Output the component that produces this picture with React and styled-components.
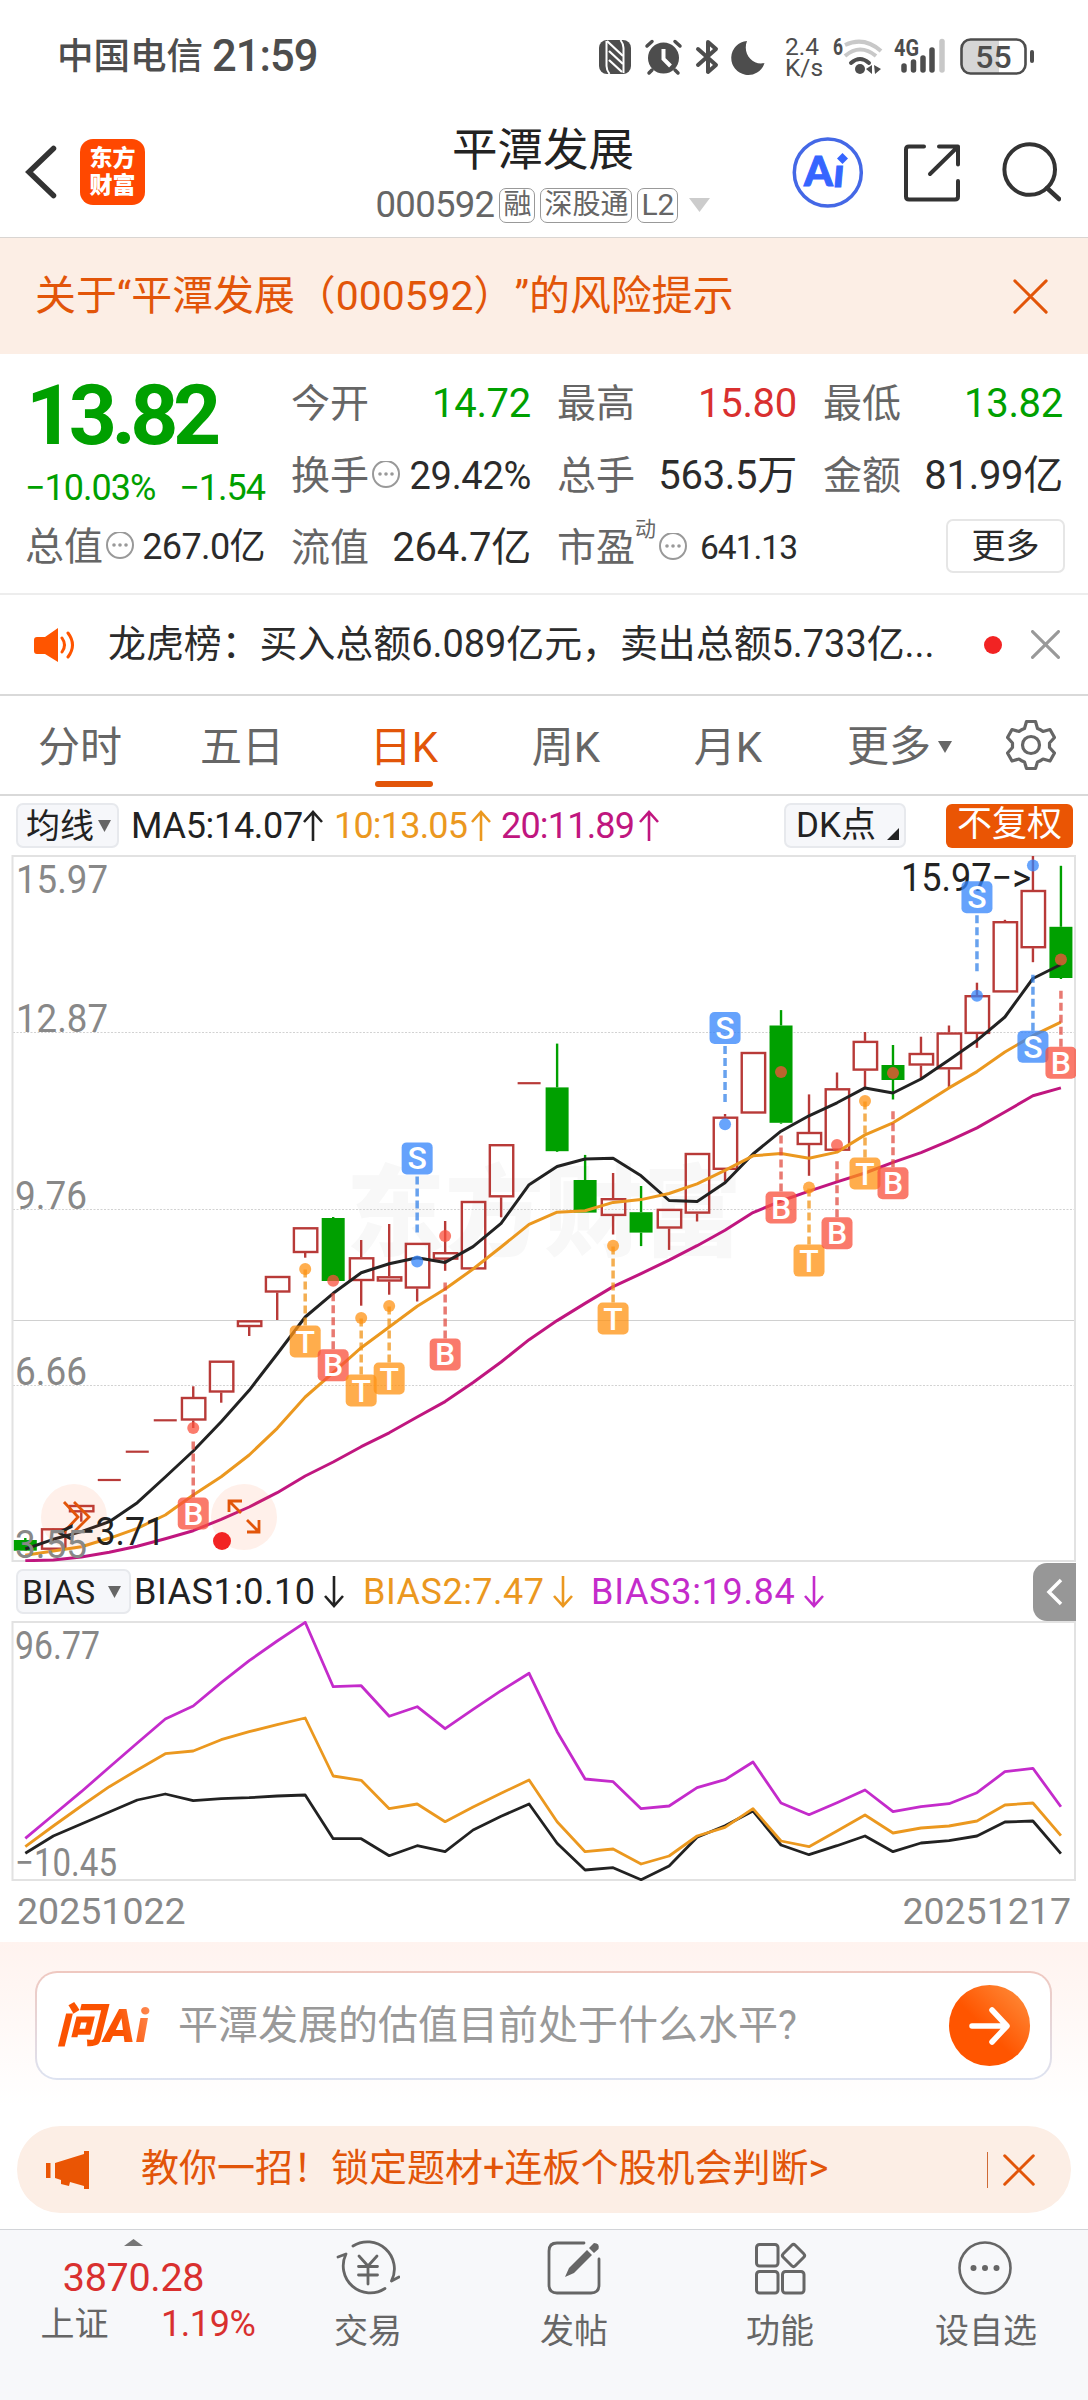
import React from "react";
import styled, { createGlobalStyle } from "styled-components";

const GlobalStyle = createGlobalStyle`
  * {
    box-sizing: border-box;
  }

  body {
    margin: 0;
    background: #fff;
    color: #2b2b2b;
    font-family: Roboto, "Noto Sans CJK SC", sans-serif;
  }

  svg {
    display: block;
    flex: none;
  }
`;

const GREEN = "#00a000";
const RED = "#d9302f";
const ORANGE = "#e25509";
const MA_YELLOW = "#eb981f";
const MA_PINK = "#c0167f";
const BIAS_PURPLE = "#c42bcb";

const Page = styled.main`
  width: 1088px;
  height: 2400px;
  display: flex;
  flex-direction: column;
  overflow: hidden;
  line-height: 1;
  white-space: nowrap;
`;

const Text = styled.span`
  font-size: ${(props) => props.$size}px;
  font-weight: ${(props) => props.$weight || 400};
  color: ${(props) => props.$color || "inherit"};
  letter-spacing: ${(props) => props.$track || 0}px;
  text-spacing-trim: space-all;
`;

/* status bar */

const StatusBar = styled.div`
  height: 114px;
  padding: 0 53px 0 57px;
  display: flex;
  align-items: center;
  color: #4d4d4d;
`;

const Clock = styled.span`
  margin-left: 9px;
  font-size: 43.5px;
  font-weight: 500;
  letter-spacing: -1px;
`;

const StatusIcons = styled.div`
  margin-left: auto;
  display: flex;
  align-items: center;
`;

const NetSpeed = styled.div`
  width: 33px;
  margin: 0 15px 0 18px;
  font-size: 24.5px;
  line-height: 21px;
`;

/* header */

const Header = styled.header`
  height: 124px;
  padding: 0 27px 0 25px;
  display: grid;
  grid-template-columns: 1fr auto 1fr;
  align-items: start;
  border-bottom: 1px solid #d9d5d2;
`;

const HeaderLeft = styled.div`
  display: flex;
  align-items: center;
  gap: 22px;
  padding-top: 25px;
`;

const Logo = styled.div`
  width: 65px;
  height: 66px;
  padding-top: 6px;
  border-radius: 13px;
  background: #ff4800;
  color: #fff;
  text-align: center;
  font-size: 23px;
  font-weight: 900;
  line-height: 27px;
`;

const HeaderCenter = styled.div`
  display: flex;
  flex-direction: column;
  align-items: center;
  padding-top: 14px;
`;

const StockName = styled.h1`
  margin: 0;
  font-size: 45.5px;
  font-weight: 400;
  line-height: 46px;
  color: #222;
`;

const CodeRow = styled.div`
  display: flex;
  align-items: center;
  height: 36px;
  margin-top: 13px;
  color: #666;
  gap: 5px;
`;

const Tag = styled.span`
  height: 35px;
  padding: 0 3px;
  border: 1.5px solid #999;
  border-radius: 7px;
  font-size: ${(props) => props.$size || 28}px;
  line-height: 32px;
`;

const HeaderRight = styled.div`
  display: flex;
  justify-content: flex-end;
  padding-top: 22px;
`;

/* risk banner */

const Banner = styled.div`
  height: 116px;
  padding: 0 40px 0 35px;
  display: flex;
  align-items: center;
  justify-content: space-between;
  background: #fceee5;
  color: ${ORANGE};
`;

/* quote */

const Quote = styled.section`
  height: 241px;
  padding: 0 25px;
  display: grid;
  grid-template-columns: 240px 240px 240px 240px;
  column-gap: 26px;
  border-bottom: 2px solid #ededed;
`;

const QuoteColumn = styled.div`
  padding-top: ${(props) => props.$top || 14}px;
  display: flex;
  flex-direction: column;
`;

const Price = styled.div`
  height: 88px;
  padding-left: 1px;
  font-size: 84px;
  font-weight: 700;
  line-height: 88px;
  letter-spacing: -5.5px;
  color: ${GREEN};
`;

const Change = styled.div`
  height: 56px;
  margin-bottom: -5px;
  display: flex;
  align-items: center;
  justify-content: space-between;
  font-size: 36px;
  letter-spacing: -1px;
  color: ${GREEN};
`;

const Cell = styled.div`
  height: 72px;
  display: flex;
  align-items: center;
`;

const Label = styled.span`
  font-size: 39px;
  color: #666;
`;

const Value = styled.span`
  margin-left: auto;
  font-size: ${(props) => props.$size || 40}px;
  letter-spacing: ${(props) => props.$track ?? -0.3}px;
  color: ${(props) => props.$color || "#2b2b2b"};
`;

const Sup = styled.span`
  align-self: flex-start;
  margin-top: 7px;
  font-size: 21px;
  color: #666;
`;

const MoreButton = styled.button`
  align-self: flex-end;
  width: 119px;
  height: 54px;
  margin: 7px -2px 0 0;
  border: 2px solid #e6e6e6;
  border-radius: 7px;
  background: #fff;
  color: #2b2b2b;
  font: inherit;
  font-size: 34px;
  line-height: 44px;
`;

/* news strip */

const News = styled.div`
  height: 101px;
  padding: 0 28px 0 34px;
  display: flex;
  align-items: center;
  border-bottom: 2px solid #d9d9d9;
`;

const NewsText = styled.p`
  margin: 0 auto 0 32px;
  font-size: 37.9px;
`;

const RedDot = styled.i`
  width: 18px;
  height: 18px;
  margin-right: 29px;
  border-radius: 50%;
  background: #f22323;
`;

/* tabs */

const Tabs = styled.nav`
  height: 100px;
  padding-right: 32px;
  display: flex;
  align-items: center;
  border-bottom: 2px solid #d9d9d9;
  color: #666;
  font-size: 42px;
`;

const Tab = styled.div`
  width: 162px;
  height: 98px;
  display: flex;
  flex-direction: column;
  align-items: center;
  padding: 31px 2px 0 0;
  color: ${(props) => (props.$active ? ORANGE : "#666")};

  &::after {
    content: "";
    width: 58px;
    height: 6px;
    margin-top: 12px;
    border-radius: 3px;
    background: ${(props) => (props.$active ? ORANGE : "transparent")};
  }
`;

const MoreTab = styled.div`
  display: flex;
  align-items: center;
  gap: 7px;
  margin: 0 auto 0 37px;
  padding-top: 4px;
`;

/* indicator bars */

const IndicatorBar = styled.div`
  height: 59px;
  padding-left: 16px;
  display: flex;
  align-items: center;
  color: #222;
`;

const Picker = styled.div`
  width: ${(props) => props.$width}px;
  height: 45px;
  padding: 0 ${(props) => props.$right || 8}px 0 ${(props) => props.$left || 8}px;
  display: flex;
  align-items: center;
  justify-content: space-between;
  border: 2px solid #e7e9ed;
  border-radius: 7px;
  background: #f6f7fa;
  font-size: ${(props) => props.$size || 34}px;
`;

const Indicator = styled.span`
  width: ${(props) => props.$width}px;
  margin-left: ${(props) => props.$gap}px;
  display: flex;
  align-items: center;
  justify-content: space-between;
  color: ${(props) => props.$color};
  font-size: 36px;
  letter-spacing: ${(props) => props.$track || 0}px;
`;

const AdjustButton = styled.div`
  width: 127px;
  height: 44px;
  margin-left: 40px;
  border-radius: 6px;
  background: #ea5504;
  color: #fff;
  text-align: center;
  font-size: 35px;
  line-height: 42px;
`;

const Collapse = styled.div`
  width: 43px;
  height: 58px;
  margin: 0 12px 0 auto;
  padding-left: 12px;
  display: flex;
  align-items: center;
  border-radius: 14px 0 0 14px;
  background: #979797;
`;

const Dates = styled.div`
  height: 61px;
  padding: 0 17px;
  display: flex;
  align-items: center;
  justify-content: space-between;
  font-size: 37.5px;
  color: #888;
`;

/* ask box */

const Ask = styled.section`
  height: 184px;
  padding: 29px 36px 0 35px;
  background: linear-gradient(#fff3ef, #fff 165px);
`;

const AskBox = styled.div`
  height: 109px;
  padding: 0 20px 0 19px;
  display: flex;
  align-items: center;
  border: 2px solid transparent;
  border-radius: 22px;
  background: linear-gradient(#fff, #fff) padding-box,
    linear-gradient(#efc8c0, #dde3f1) border-box;
`;

const AskLogo = styled.span`
  width: 101px;
  font-size: 47px;
  font-weight: 900;
  font-style: italic;
  letter-spacing: 1px;
  line-height: 54px;
  color: transparent;
  background: linear-gradient(70deg, #fb5200 60%, #ff9868);
  background-clip: text;
`;

const AskText = styled.span`
  margin: 0 auto 0 21px;
  font-size: 40px;
  color: #999;
`;

const AskButton = styled.div`
  width: 81px;
  height: 81px;
  display: grid;
  place-items: center;
  border-radius: 50%;
  background: linear-gradient(45deg, #ff5500 45%, #ff9240);
`;

/* promo pill */

const Promo = styled.div`
  height: 87px;
  margin: 0 17px 16px;
  padding: 0 36px 0 28px;
  flex: none;
  display: flex;
  align-items: center;
  border-radius: 44px;
  background: #fceee5;
  color: ${ORANGE};
`;

const PromoText = styled.span`
  margin: 0 auto 4px 51px;
  font-size: 38px;
`;

const Divider = styled.i`
  width: 1px;
  height: 36px;
  margin-right: 15px;
  background: #cf6a35;
`;

/* bottom nav */

const BottomNav = styled.footer`
  flex: 1;
  display: grid;
  grid-template-columns: 265px repeat(4, 206px);
  border-top: 1px solid #d2d4d8;
  background: #f7f8fa;
`;

const IndexBox = styled.div`
  display: flex;
  flex-direction: column;
  align-items: center;
  padding: 9px 0 0 2px;
`;

const IndexRow = styled.div`
  width: 215px;
  margin: 8px 0 0 29px;
  display: flex;
  align-items: center;
  justify-content: space-between;
`;

const NavItem = styled.div`
  display: flex;
  flex-direction: column;
  align-items: center;
  padding-top: 8px;
  gap: 16px;
  font-size: 34px;
  color: #666;
`;

/* K-line data: [high, bodyTop, bodyBottom, low, falling] in chart pixels */

const candles = [
  [683, 685, 695.7, 696, 1],
  [673, 673.3, 694.7, 694],
  [650, 650, 657.3, 666.7],
  [625, 625, 625, 625],
  [596.7, 596.7, 596.7, 596.7],
  [565.3, 565.3, 565.3, 565.3],
  [531.3, 542, 565.5, 573],
  [506, 505.7, 537.5, 547.7],
  [466, 465.3, 472, 481],
  [422, 421, 437.5, 465],
  [373, 372.3, 398, 402.7],
  [362, 363, 426, 426, 1],
  [385, 402.3, 426, 450.7],
  [369, 421.3, 426.5, 439.7],
  [388, 387.9, 433.5, 446.5],
  [366, 397.2, 404.6, 415.8],
  [347, 346, 414.4, 414],
  [290, 289.2, 342.3, 362.3],
  [228.2, 228.2, 228.2, 228.2],
  [188.6, 232.4, 296.2, 297, 1],
  [299.9, 325, 357.6, 357.6, 1],
  [318, 343.2, 360.9, 379.5],
  [331, 357.2, 377.6, 391.1, 1],
  [354, 353.9, 373.5, 394.9],
  [299, 298, 358.6, 366.5],
  [259, 261.7, 314.8, 326.4],
  [198, 197, 258.5, 258],
  [155.1, 170.5, 267.8, 268.7, 1],
  [239.4, 277, 290, 320.8],
  [217.5, 233.3, 295.7, 295],
  [177, 185.9, 215.6, 232.9],
  [190, 210, 225, 244.5, 1],
  [181.7, 198, 210.5, 223],
  [170.5, 177.5, 214.3, 232.9],
  [127.7, 140.2, 178.9, 192.8],
  [64.8, 66.2, 137.4, 137],
  [1, 35, 93.2, 107.2],
  [10.8, 71.8, 123, 124, 1],
];

const ma5 = [
  694, 684.3, 676.6, 666.7, 647.7, 622, 596, 566.7, 535.3, 499, 462, 438.3,
  417.7, 408.8, 402.8, 407.4, 391.6, 368.3, 329.7, 311.5, 304, 303.2, 320.8,
  345.5, 346.5, 327.8, 299, 276.2, 260.8, 247.8, 232.9, 238, 224, 205, 185.4,
  162, 123.5, 109.5,
];

const ma10 = [
  700.3, 696, 691.7, 683.3, 673.3, 660, 640, 621.7, 600, 573.3, 542, 517.7,
  492.7, 472, 451.2, 434, 414, 392, 369.3, 357.2, 355.8, 347.4, 344.6, 338.5,
  328.8, 315.3, 300.8, 298.5, 303.2, 297.1, 279.9, 267.8, 250.6, 232.9, 216.6,
  197, 180.7, 167.2,
];

const ma20 = [
  705.7, 705, 702, 697.3, 691.3, 683.7, 675.7, 664.3, 652, 637.7, 621, 607,
  591.7, 577.8, 562, 546.6, 527.5, 507, 484.7, 465.6, 448.4, 431.6, 418.6,
  405.1, 390.7, 375.3, 357.6, 346, 336.2, 326.9, 318, 307.4, 297.6, 285.9,
  272.9, 257, 240.8, 232.9,
];

/* [index, letter, dot y, badge center y] */
const markers = [
  [6, "B", 573, 658.5],
  [10, "T", 414, 486.5],
  [11, "B", 425.7, 510.3],
  [12, "T", 463, 535.5],
  [13, "T", 451, 523.5],
  [14, "S", 406.5, 303.4],
  [15, "B", 381, 499.4],
  [21, "T", 390.7, 463.5],
  [25, "S", 269.2, 173],
  [27, "B", 217, 352.5],
  [28, "T", 332.5, 405.6],
  [29, "B", 290, 378.3],
  [30, "T", 246, 318.5],
  [31, "B", 218, 328.3],
  [34, "S", 140.7, 42.2],
  [36, "S", 10.4, 191.7],
  [37, "B", 104.4, 207.7],
];

const markerColors = {
  B: ["#f9503c", "#e0483c"],
  T: ["#ff9314", "#f0900f"],
  S: ["#3485fb", "#2f7fe8"],
};

const bias1 = [
  880, 828, 792, 756, 720, 702, 722, 716, 713, 708, 705, 836, 836, 887, 857,
  875, 810, 769, 732, 850, 930, 923, 959, 918, 832, 797, 753, 855, 884, 857,
  828, 875, 849, 842, 828, 786, 783, 881,
];

const bias2 = [
  860, 798, 738, 680, 630, 581, 573, 539, 515, 494, 474, 648, 661, 746, 732,
  785, 741, 700, 660, 785, 875, 867, 912, 888, 828, 802, 746, 843, 860, 813,
  765, 819, 804, 798, 783, 735, 729, 827,
];

const bias3 = [
  835, 765, 695, 622, 549, 477, 438, 368, 302, 243, 187, 380, 377, 469, 440,
  506, 448, 392, 340, 515, 657, 665, 746, 738, 683, 659, 606, 729, 764, 728,
  690, 755, 740, 731, 698, 635, 625, 740,
];

const xAt = (i) => 25.3 + i * 27.99;
const toPoints = (list, y = (v) => v) =>
  list.map((v, i) => `${xAt(i).toFixed(1)},${y(v).toFixed(1)}`).join(" ");
const biasY = (v) => v / 3 - 61;

const AxisText = ({ x = 17, y, width, children, fill = "#888" }) => (
  <text
    x={x}
    y={y}
    fontSize="39"
    fill={fill}
    textLength={width}
    lengthAdjust="spacingAndGlyphs">
    {children}
  </text>
);

const Candle = ({ i, data }) => {
  const [high, top, bottom, low, falling] = data;
  const x = xAt(i);
  const color = falling ? GREEN : "#b83a38";
  if (top === bottom) {
    return <path d={`M${x - 11.5} ${top}h23`} stroke={color} strokeWidth="2.2" />;
  }
  return (
    <g stroke={color} strokeWidth="2.4" fill="none">
      {high < top && <path d={`M${x} ${high}V${top}`} />}
      {low > bottom && <path d={`M${x} ${bottom}V${low}`} />}
      {falling ? (
        <rect
          x={x - 11.5}
          y={top}
          width="23"
          height={bottom - top}
          fill={color}
          stroke="none"
        />
      ) : (
        <rect x={x - 11.3} y={top + 1} width="23.4" height={bottom - top - 2} />
      )}
    </g>
  );
};

const Marker = ({ i, letter, dot, badge }) => {
  const x = xAt(i);
  const [fill, line] = markerColors[letter];
  const above = badge < dot;
  const from = above ? badge + 18 : badge - 72;
  return (
    <g>
      <path
        d={`M${x} ${from}v56`}
        stroke={line}
        strokeWidth="3.5"
        strokeDasharray="8 4"
        opacity="0.72"
      />
      <circle cx={x} cy={dot} r="6" fill={fill} opacity="0.75" />
      <rect
        x={x - 15.5}
        y={badge - 16}
        width="31"
        height="32"
        rx="5"
        fill={fill}
        opacity="0.76"
      />
      <text
        x={x}
        y={badge + 11}
        textAnchor="middle"
        fontSize="32"
        fontWeight="500"
        fill="#fff">
        {letter}
      </text>
    </g>
  );
};

const KLineChart = () => (
  <svg width="1088" height="707" viewBox="0 0 1088 707">
    <defs>
      <clipPath id="plot">
        <rect x="12" y="0" width="1064" height="707" />
      </clipPath>
    </defs>
    <text
      x="346"
      y="393"
      fontSize="99"
      fontWeight="900"
      fill="#f8f8f8"
      fontFamily="Noto Sans CJK SC">
      东方财富
    </text>
    {[177.5, 354.5, 530.5].map((y) => (
      <path
        key={y}
        d={`M13 ${y}H1075`}
        stroke="#d2d2d2"
        strokeDasharray="2 1.5"
      />
    ))}
    <path d="M13 465.5H1075" stroke="#d0d0d0" />
    <rect
      x="12.5"
      y="1"
      width="1062.5"
      height="705"
      fill="none"
      stroke="#e2e2e2"
      strokeWidth="2"
    />
    <g clipPath="url(#plot)">
      {candles.map((data, i) => (
        <Candle key={i} i={i} data={data} />
      ))}
      <g fill="none" strokeWidth="3" strokeLinejoin="round">
        <polyline points={toPoints(ma5)} stroke="#222" />
        <polyline points={toPoints(ma10)} stroke={MA_YELLOW} />
        <polyline points={toPoints(ma20)} stroke={MA_PINK} />
      </g>
      <circle cx="74" cy="662" r="33" fill="#ff5a14" opacity="0.09" />
      <circle cx="244" cy="662" r="33" fill="#ff5a14" opacity="0.09" />
      <g fill="none" stroke={ORANGE} strokeWidth="2.8">
        <path d="M64 647l14 15l-14 15M74 647l15 15l-15 15" />
        <path d="M229 657v-11h13M230 647l11 11M247 677h12v-12M258 676l-11-11" />
      </g>
      <AxisText x="57" y="690" width="108" fill="#222">
        &lt;−3.71
      </AxisText>
      <AxisText x="901" y="36" width="130" fill="#222">
        15.97−&gt;
      </AxisText>
      <circle cx="222" cy="686" r="9" fill="#f22323" />
      {markers.map(([i, letter, dot, badge]) => (
        <Marker key={i} i={i} letter={letter} dot={dot} badge={badge} />
      ))}
    </g>
    <AxisText x="16" y="38" width="92">
      15.97
    </AxisText>
    <AxisText x="16" y="177" width="92">
      12.87
    </AxisText>
    <AxisText x="15" y="354" width="72">
      9.76
    </AxisText>
    <AxisText x="15" y="530" width="72">
      6.66
    </AxisText>
    <AxisText x="15" y="703" width="72">
      3.55
    </AxisText>
  </svg>
);

const BiasChart = () => (
  <svg width="1088" height="260" viewBox="0 0 1088 260">
    <rect
      x="12.5"
      y="1"
      width="1062.5"
      height="258"
      fill="none"
      stroke="#e2e2e2"
      strokeWidth="2"
    />
    <g fill="none" strokeWidth="2.8" strokeLinejoin="round">
      <polyline points={toPoints(bias1, biasY)} stroke="#222" />
      <polyline points={toPoints(bias2, biasY)} stroke={MA_YELLOW} />
      <polyline points={toPoints(bias3, biasY)} stroke={BIAS_PURPLE} />
    </g>
    <AxisText x="15" y="38" width="85">
      96.77
    </AxisText>
    <AxisText x="15" y="255" width="102">
      −10.45
    </AxisText>
  </svg>
);

/* small drawings */

const Caret = ({ width = 13, height = 12, color = "#666" }) => (
  <svg width={width} height={height} viewBox="0 0 10 10" preserveAspectRatio="none">
    <path d="M0 0h10L5 10z" fill={color} />
  </svg>
);

const Cross = ({ size = 28, color = "currentColor", width = 3 }) => (
  <svg width={size} height={size} viewBox="0 0 28 28">
    <path
      d="M1.5 1.5l25 25M26.5 1.5l-25 25"
      stroke={color}
      strokeWidth={width}
      strokeLinecap="round"
    />
  </svg>
);

const Arrow = ({ up }) => (
  <svg width="20" height="34" viewBox="0 0 20 34">
    <path
      d={up ? "M10 32V3M1 13l9-10 9 10" : "M10 1v30M1 21l9 10 9-10"}
      fill="none"
      stroke="currentColor"
      strokeWidth="2.6"
    />
  </svg>
);

const InfoDots = () => (
  <svg width="32" height="30" viewBox="0 0 32 30">
    <circle cx="17" cy="13" r="13" fill="none" stroke="#999" strokeWidth="2" />
    <g fill="#999">
      <circle cx="11" cy="13" r="1.8" />
      <circle cx="17" cy="13" r="1.8" />
      <circle cx="23" cy="13" r="1.8" />
    </g>
  </svg>
);

const PhoneIcons = () => (
  <svg width="168" height="40" viewBox="0 0 168 40" fill="#4d4d4d">
    <rect x="0" y="3" width="32" height="34" rx="8" />
    <g stroke="#fff" fill="none">
      <path d="M7.500 4v25q0 4 3 8M24.500 36V11q0-4-3-8" strokeWidth="2" />
      <path d="M8 4L24 19M10 14L24 27M10 23L23 35" strokeWidth="2.2" />
    </g>
    <circle cx="64.500" cy="21" r="15.500" />
    <path d="M64.500 12v10l7 7" stroke="#fff" strokeWidth="4" fill="none" />
    <path
      d="M48 9l5-4.500M81 9l-5-4.500M53 33l-3 3M76 33l3 3"
      stroke="#4d4d4d"
      strokeWidth="3.500"
      strokeLinecap="round"
    />
    <path
      d="M99 12l18 16-8 7V5l8 7-18 16"
      fill="none"
      stroke="#4d4d4d"
      strokeWidth="4"
      strokeLinejoin="round"
      strokeLinecap="round"
    />
    <path d="M148 4a17 17 0 1 0 17.500 22C154 29 143 17 148 4z" />
  </svg>
);

const Wifi = () => (
  <svg width="50" height="40" viewBox="0 0 50 40">
    <text
      x="0"
      y="18"
      fontSize="23"
      fontWeight="700"
      fill="#4d4d4d"
      textLength="10"
      lengthAdjust="spacingAndGlyphs">
      6
    </text>
    <g fill="none" strokeWidth="4">
      <path d="M12 8Q31-1 48 14" stroke="#c8c8c8" />
      <path d="M12 19Q27 6 43 19" stroke="#c8c8c8" />
      <path d="M18 26Q27 18 36 26" stroke="#4d4d4d" strokeLinecap="round" />
    </g>
    <circle cx="27" cy="32" r="5" fill="#4d4d4d" />
    <path d="M39 28v9l-6-5zM41 28l7 4-6 5z" fill="#4d4d4d" />
  </svg>
);

const Signal = () => (
  <svg width="52" height="40" viewBox="0 0 52 40">
    <text
      x="0"
      y="19"
      fontSize="23"
      fontWeight="700"
      fill="#4d4d4d"
      textLength="25"
      lengthAdjust="spacingAndGlyphs">
      4G
    </text>
    <g stroke="#4d4d4d" strokeWidth="5.500" strokeLinecap="round">
      <path d="M10 29v4M19.500 25v8M29 21v12M38 13v20" />
      <path d="M48 4.500V33" stroke="#c8c8c8" />
    </g>
  </svg>
);

const Battery = () => (
  <svg width="75" height="40" viewBox="0 0 75 40">
    <path d="M10 3H39V36H10Q2 36 2 28V11Q2 3 10 3Z" fill="#d6d6d6" />
    <rect
      x="1.500"
      y="2.500"
      width="64"
      height="34"
      rx="9"
      fill="none"
      stroke="#4d4d4d"
      strokeWidth="2.600"
    />
    <path d="M72 15v9" stroke="#4d4d4d" strokeWidth="4" strokeLinecap="round" />
    <text
      x="33.500"
      y="31"
      textAnchor="middle"
      fontSize="32"
      fontWeight="500"
      fill="#4d4d4d">
      55
    </text>
  </svg>
);

const BackIcon = () => (
  <svg width="33" height="56" viewBox="0 0 33 56">
    <path
      d="M28.500 4.500L4 28l24.500 23.500"
      fill="none"
      stroke="#333"
      strokeWidth="5.500"
      strokeLinecap="round"
    />
  </svg>
);

const HeaderIcons = () => (
  <svg width="270" height="74" viewBox="0 0 270 74" fill="none">
    <circle cx="36.800" cy="36.500" r="33.500" stroke="#4468e6" strokeWidth="3.500" />
    <text
      x="13"
      y="50"
      fontSize="41"
      fontFamily="Lato"
      fontWeight="900"
      fill="#3565ff"
      stroke="#3565ff">
      A
    </text>
    <text
      x="42"
      y="51"
      fontSize="41"
      fontFamily="Lato"
      fontWeight="900"
      fill="#3565ff"
      stroke="#3565ff"
      transform="skewX(-5) translate(4 0)">
      ı
    </text>
    <path d="M51.500 17l5.500 5.500-5.500 5.500-5.500-5.500z" fill="#3565ff" />
    <g
      stroke="#333"
      strokeWidth="4"
      strokeLinecap="round"
      strokeLinejoin="round">
      <path d="M133 10.500h-15q-3 0-3 3v47q0 3 3 3h46q3 0 3-3V45" />
      <path d="M148 10.500h19v18M166 11.500L139 38" />
      <circle cx="238.700" cy="33.500" r="25.300" />
      <path d="M256 52l12 11" strokeWidth="4.500" />
    </g>
  </svg>
);

const Speaker = () => (
  <svg width="42" height="36" viewBox="0 0 42 36">
    <path d="M3 10h8L24 1v34L11 27H3q-3 0-3-3V13q0-3 3-3z" fill="#ff5500" />
    <path
      d="M28 11q5 7 0 14M34 6q9 12 0 24"
      fill="none"
      stroke="#ff5500"
      strokeWidth="3"
      strokeLinecap="round"
    />
  </svg>
);

const Gear = () => (
  <svg width="50" height="52" viewBox="0 0 50 52">
    <path
      d="M20.500 2.500h9l2 7q3 1 5.500 3l7-2 4.500 8-5 5.500v4.500l5 5.500-4.500 8-7-2q-2.500 2-5.500 3l-2 6.500h-9l-2-6.500q-3-1-5.500-3l-7 2-4.500-8 5-5.500V24l-5-5.500 4.500-8 7 2q2.500-2 5.500-3z"
      fill="none"
      stroke="#666"
      strokeWidth="3.200"
      strokeLinejoin="round"
    />
    <circle cx="25" cy="26" r="8.500" fill="none" stroke="#666" strokeWidth="3.200" />
  </svg>
);

const Megaphone = () => (
  <svg width="45" height="40" viewBox="0 0 45 40" fill="#ea5504">
    <path d="M1 13h4.500v15H1zM10 13L39 4V1h5v38h-5v-3l-14-4-1 4-8-2v-4l-6-2z" />
  </svg>
);

const TradeIcon = () => (
  <svg width="64" height="60" viewBox="0 0 64 60">
    <g
      fill="none"
      stroke="#666"
      strokeWidth="2.800"
      strokeLinecap="round"
      strokeLinejoin="round">
      <path d="M17 8A27 27 0 0 1 55.500 43l7.500-4M49 50.500A27 27 0 0 1 10 16l-8 3" />
      <path d="M23 18l9 10 9-10M32 28v18M22.500 28.500h19M22.500 37h19" />
    </g>
  </svg>
);

const PostIcon = () => (
  <svg width="60" height="60" viewBox="0 0 60 60">
    <path
      d="M40 5H13q-8 0-8 8v34q0 8 8 8h34q8 0 8-8V21"
      fill="none"
      stroke="#666"
      strokeWidth="2.800"
      strokeLinecap="round"
    />
    <path d="M21 39l4-9 18-18 5 5-18 18zM45 10l5-5q6 0 4.500 6L50 15z" fill="#666" />
  </svg>
);

const FunctionIcon = () => (
  <svg width="60" height="60" viewBox="0 0 60 60">
    <g fill="none" stroke="#666" strokeWidth="3">
      <rect x="6.500" y="6.500" width="21.500" height="21.500" rx="3" />
      <rect x="6.500" y="33.500" width="21.500" height="21.500" rx="3" />
      <rect x="32.500" y="33.500" width="21.500" height="21.500" rx="3" />
      <rect
        x="35"
        y="9"
        width="17"
        height="17"
        rx="2.500"
        transform="rotate(45 43.500 17.500)"
      />
    </g>
  </svg>
);

const WatchIcon = () => (
  <svg width="60" height="60" viewBox="0 0 60 60">
    <circle cx="29" cy="30" r="25.500" fill="none" stroke="#666" strokeWidth="2.600" />
    <g fill="#666">
      <circle cx="17.500" cy="30" r="3" />
      <circle cx="29" cy="30" r="3" />
      <circle cx="40.500" cy="30" r="3" />
    </g>
  </svg>
);

const navItems = [
  ["交易", TradeIcon],
  ["发帖", PostIcon],
  ["功能", FunctionIcon],
  ["设自选", WatchIcon],
];

const App = () => {
  return (
    <Page>
      <GlobalStyle />

      <StatusBar>
        <Text $size={36.5} $weight={500}>
          中国电信
        </Text>
        <Clock>21:59</Clock>
        <StatusIcons>
          <PhoneIcons />
          <NetSpeed>
            2.4
            <br />
            K/s
          </NetSpeed>
          <Wifi />
          <svg width="11" height="1" />
          <Signal />
          <svg width="14" height="1" />
          <Battery />
        </StatusIcons>
      </StatusBar>

      <Header>
        <HeaderLeft>
          <BackIcon />
          <Logo>
            东方
            <br />
            财富
          </Logo>
        </HeaderLeft>
        <HeaderCenter>
          <StockName>平潭发展</StockName>
          <CodeRow>
            <Text $size={36.5} $track={-0.7}>
              000592
            </Text>
            <Tag>融</Tag>
            <Tag>深股通</Tag>
            <Tag $size={30}>L2</Tag>
            <svg width="1" height="1" />
            <Caret width={21} height={14} color="#ccc" />
          </CodeRow>
        </HeaderCenter>
        <HeaderRight>
          <HeaderIcons />
        </HeaderRight>
      </Header>

      <Banner>
        <Text $size={40.9}>关于“平潭发展（000592）”的风险提示</Text>
        <Cross size={35} width={2.4} />
      </Banner>

      <Quote>
        <QuoteColumn $top={18}>
          <Price>13.82</Price>
          <Change>
            <span>−10.03%</span>
            <span>−1.54</span>
          </Change>
          <Cell>
            <Label>总值</Label>
            <InfoDots />
            <Value $size={36} $track={-0.6}>
              267.0亿
            </Value>
          </Cell>
        </QuoteColumn>
        <QuoteColumn>
          <Cell>
            <Label>今开</Label>
            <Value $color={GREEN}>14.72</Value>
          </Cell>
          <Cell>
            <Label>换手</Label>
            <InfoDots />
            <Value $size={38}>29.42%</Value>
          </Cell>
          <Cell>
            <Label>流值</Label>
            <Value>264.7亿</Value>
          </Cell>
        </QuoteColumn>
        <QuoteColumn>
          <Cell>
            <Label>最高</Label>
            <Value $color={RED}>15.80</Value>
          </Cell>
          <Cell>
            <Label>总手</Label>
            <Value>563.5万</Value>
          </Cell>
          <Cell>
            <Label>市盈</Label>
            <Sup>动</Sup>
            <InfoDots />
            <Value $size={33.5} $track={-1}>
              641.13
            </Value>
          </Cell>
        </QuoteColumn>
        <QuoteColumn>
          <Cell>
            <Label>最低</Label>
            <Value $color={GREEN}>13.82</Value>
          </Cell>
          <Cell>
            <Label>金额</Label>
            <Value>81.99亿</Value>
          </Cell>
          <MoreButton>更多</MoreButton>
        </QuoteColumn>
      </Quote>

      <News>
        <Speaker />
        <NewsText>龙虎榜：买入总额6.089亿元，卖出总额5.733亿...</NewsText>
        <RedDot />
        <Cross size={29} color="#999" />
      </News>

      <Tabs>
        {["分时", "五日", "日K", "周K", "月K"].map((name) => (
          <Tab key={name} $active={name === "日K"}>
            {name}
          </Tab>
        ))}
        <MoreTab>
          更多
          <Caret width={14} height={12} />
        </MoreTab>
        <Gear />
      </Tabs>

      <IndicatorBar>
        <Picker $width={103} $right={6}>
          均线
          <Caret />
        </Picker>
        <Indicator $width={191} $gap={12} $color="#222" $track={-0.3}>
          MA5:14.07
          <Arrow up />
        </Indicator>
        <Indicator $width={157} $gap={12} $color={MA_YELLOW} $track={-0.8}>
          10:13.05
          <Arrow up />
        </Indicator>
        <Indicator $width={158} $gap={10} $color={MA_PINK} $track={-0.8}>
          20:11.89
          <Arrow up />
        </Indicator>
        <svg width="125" height="1" />
        <Picker $width={122} $left={10} $right={5} $size={35}>
          DK点
          <svg width="12" height="28" viewBox="0 0 12 28">
            <path d="M12 16v12H0z" fill="#222" />
          </svg>
        </Picker>
        <AdjustButton>不复权</AdjustButton>
      </IndicatorBar>

      <KLineChart />

      <IndicatorBar>
        <Picker $width={115} $left={4} $size={34}>
          BIAS
          <Caret />
        </Picker>
        <Indicator $width={210} $gap={3} $color="#222" $track={0.5}>
          BIAS1:0.10
          <Arrow />
        </Indicator>
        <Indicator $width={210} $gap={19} $color={MA_YELLOW} $track={0.5}>
          BIAS2:7.47
          <Arrow />
        </Indicator>
        <Indicator $width={233} $gap={18} $color={BIAS_PURPLE} $track={0.7}>
          BIAS3:19.84
          <Arrow />
        </Indicator>
        <Collapse>
          <svg width="20" height="28" viewBox="0 0 20 28">
            <path
              d="M16 2L4 14l12 12"
              fill="none"
              stroke="#fff"
              strokeWidth="3.500"
            />
          </svg>
        </Collapse>
      </IndicatorBar>

      <BiasChart />

      <Dates>
        <span>20251022</span>
        <span>20251217</span>
      </Dates>

      <Ask>
        <AskBox>
          <AskLogo>问Ai</AskLogo>
          <AskText>平潭发展的估值目前处于什么水平?</AskText>
          <AskButton>
            <svg width="42" height="38" viewBox="0 0 42 38">
              <path
                d="M3 19h34M23 3l15 16-15 16"
                fill="none"
                stroke="#fff"
                strokeWidth="5.500"
                strokeLinecap="round"
                strokeLinejoin="round"
              />
            </svg>
          </AskButton>
        </AskBox>
      </Ask>

      <Promo>
        <Megaphone />
        <PromoText>教你一招！锁定题材+连板个股机会判断&gt;</PromoText>
        <Divider />
        <Cross size={32} width={2.6} />
      </Promo>

      <BottomNav>
        <IndexBox>
          <svg width="19" height="7" viewBox="0 0 19 7">
            <path d="M0 7L9.500 0 19 7z" fill="#777" />
          </svg>
          <svg width="1" height="12" />
          <Text $size={39.5} $color={RED} $track={-0.3}>
            3870.28
          </Text>
          <IndexRow>
            <Text $size={34} $color="#666">
              上证
            </Text>
            <Text $size={36} $color={RED} $track={-0.4}>
              1.19%
            </Text>
          </IndexRow>
        </IndexBox>
        {navItems.map(([name, Icon]) => (
          <NavItem key={name}>
            <Icon />
            {name}
          </NavItem>
        ))}
      </BottomNav>
    </Page>
  );
};

export default App;
